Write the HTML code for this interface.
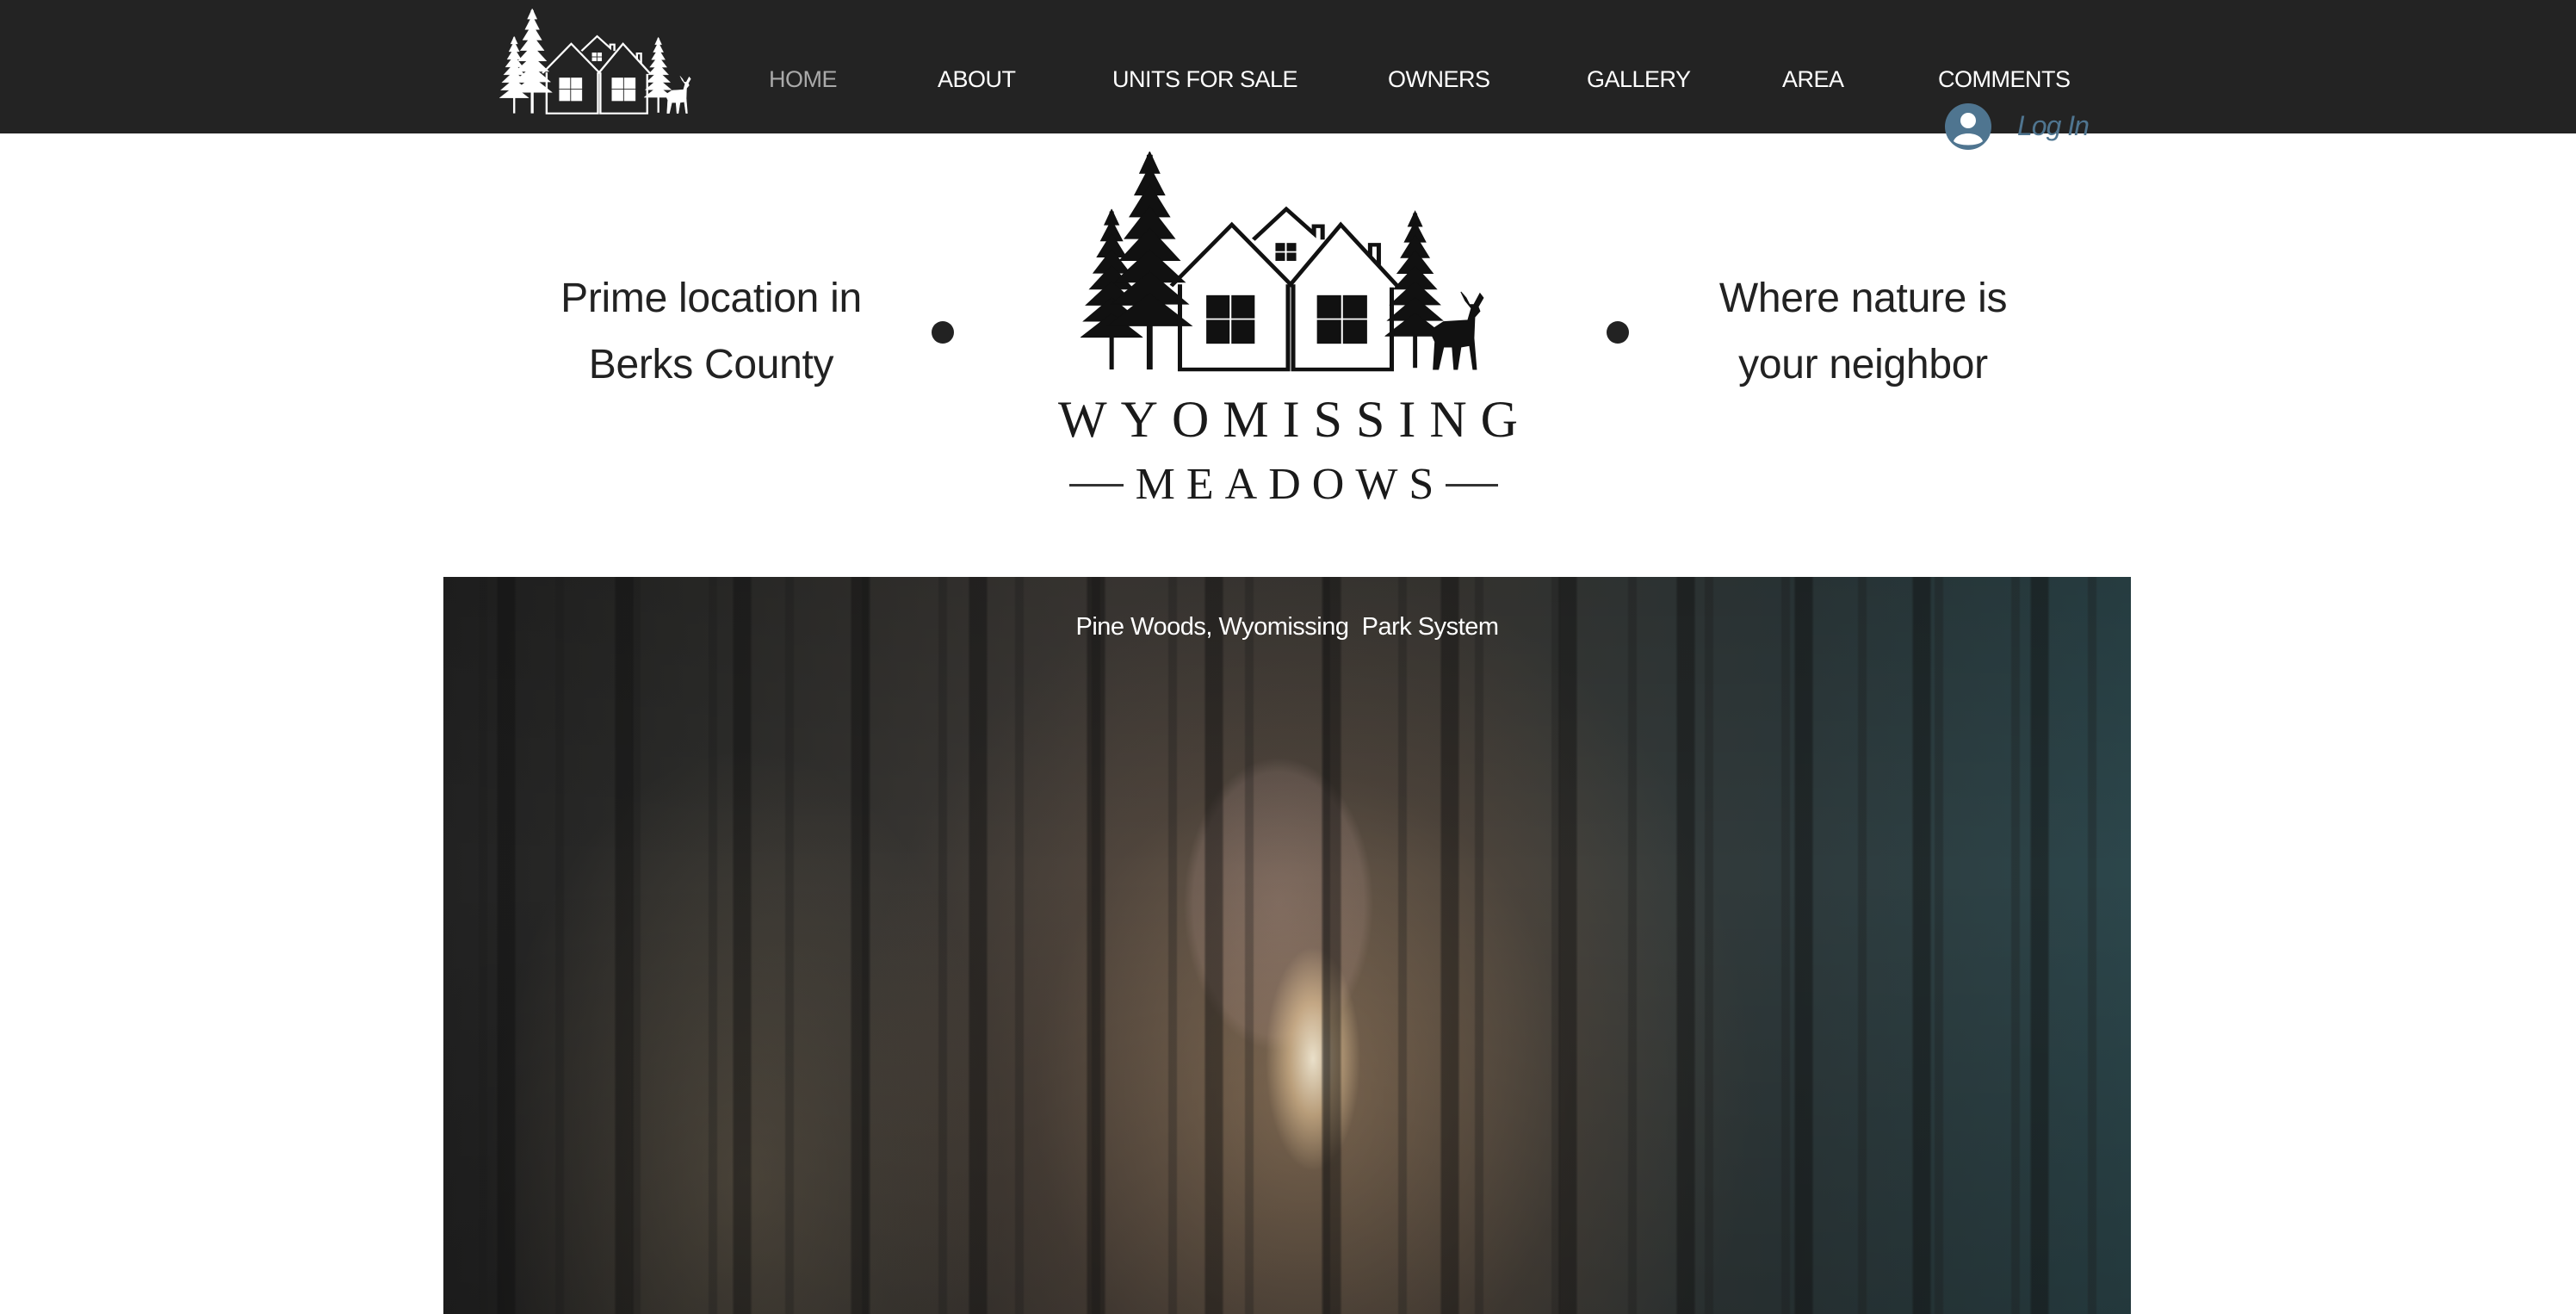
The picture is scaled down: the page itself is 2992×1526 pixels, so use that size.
<!DOCTYPE html>
<html><head><meta charset="utf-8">
<style>
*{margin:0;padding:0;box-sizing:border-box}
body{width:2992px;height:1526px;overflow:hidden;background:#fff;font-family:"Liberation Sans",sans-serif;position:relative}
.nav{position:absolute;left:0;top:0;width:2992px;height:155px;background:#232323}
.nav a{position:absolute;top:76px;font-size:27px;color:#fff;text-decoration:none;letter-spacing:-0.5px;line-height:32px}
.txt{position:absolute;font-size:48px;color:#222;text-align:center;line-height:77px;letter-spacing:-0.3px}
.dot{position:absolute;width:26px;height:26px;border-radius:50%;background:#222}
.photo{position:absolute;left:515px;top:670px;width:1960px;height:856px;overflow:hidden;
background:
radial-gradient(ellipse 55px 130px at 1010px 560px,rgba(255,244,220,1),rgba(255,220,170,.6) 50%,rgba(255,200,150,0) 100%),
radial-gradient(ellipse 110px 170px at 970px 380px,rgba(230,190,185,.22),rgba(230,190,185,.14) 90%,rgba(0,0,0,0) 100%),
radial-gradient(ellipse 520px 620px at 1000px 600px,rgba(210,165,120,.5),rgba(150,110,80,.18) 60%,rgba(0,0,0,0) 100%),
radial-gradient(ellipse 300px 500px at 350px 700px,rgba(200,170,130,.25),rgba(0,0,0,0) 100%),
linear-gradient(90deg,#222 0%,#2c2c2a 15%,#403c38 40%,#3c3a36 60%,#2e3a3c 80%,#2c464b 100%);}
.trunks{position:absolute;inset:0;background:
repeating-linear-gradient(90deg,rgba(15,15,15,0) 0,rgba(15,15,15,0) 61px,rgba(15,15,15,.45) 64px,rgba(15,15,15,.45) 82px,rgba(15,15,15,0) 85px,rgba(15,15,15,0) 137px),
repeating-linear-gradient(90deg,rgba(25,25,25,0) 0,rgba(25,25,25,0) 40px,rgba(25,25,25,.3) 42px,rgba(25,25,25,.3) 50px,rgba(25,25,25,0) 52px,rgba(25,25,25,0) 89px),
linear-gradient(180deg,rgba(0,0,0,.15),rgba(0,0,0,0) 40%,rgba(0,0,0,.2))}
.cap{position:absolute;left:0;width:1960px;top:42px;text-align:center;color:#fff;font-size:29px;letter-spacing:-0.5px}
</style></head><body>
<svg width="0" height="0" style="position:absolute">
<defs>
<symbol id="tree" viewBox="0 0 100 300">
<rect x="47" y="5" width="6" height="295"/>
<polygon points="50,0 38,30 62,30"/>
<polygon points="50,20 32,60 68,60"/>
<polygon points="50,45 26,90 74,90"/>
<polygon points="50,75 20,120 80,120"/>
<polygon points="50,105 14,150 86,150"/>
<polygon points="50,135 8,180 92,180"/>
<polygon points="50,165 4,210 96,210"/>
<polygon points="50,195 0,240 100,240"/>
</symbol>
<symbol id="logo" viewBox="0 0 480 300">
<use href="#tree" x="0" y="77" width="72" height="215"/>
<use href="#tree" x="30" y="0" width="100" height="292"/>
<use href="#tree" x="352" y="77" width="70" height="215"/>
<g fill="none" stroke-width="5" stroke-linejoin="miter">
<path d="M105,180 L175,98 L243,178 L301,98 L368,182"/>
<path d="M200,118 L238,77 L270,110 L270,100 L280,100 L280,118"/>
<path d="M335,140 L335,125 L345,125 L345,152"/>
<path d="M115,178 V292 H240 V178 M246,178 V292 H360 V182"/>
</g>
<rect x="146" y="193" width="26" height="30"/><rect x="175" y="193" width="26" height="30"/>
<rect x="146" y="226" width="26" height="31"/><rect x="175" y="226" width="26" height="31"/>
<rect x="274" y="193" width="27" height="30"/><rect x="304" y="193" width="27" height="30"/>
<rect x="274" y="226" width="27" height="31"/><rect x="304" y="226" width="27" height="31"/>
<rect x="226" y="123" width="10" height="10"/><rect x="239" y="123" width="10" height="10"/>
<rect x="226" y="136" width="10" height="10"/><rect x="239" y="136" width="10" height="10"/>
<path d="M408,292 L410,255 L404,240 L420,228 L448,226 L452,210 L445,200 L440,188 L446,196 L450,205 L455,205 L462,190 L466,196 L460,208 L462,214 L456,222 L455,250 L458,292 L454,292 L450,260 L440,262 L436,292 L432,292 L430,262 L420,262 L414,292 Z"/>
</symbol>
</defs>
</svg>
<div class="nav">
<svg style="position:absolute;left:580px;top:10px" width="229" height="125" viewBox="0 0 480 300" preserveAspectRatio="none" fill="#fff" stroke="#fff"><use href="#logo"/></svg>
<a style="left:893px;color:#aaa">HOME</a>
<a style="left:1089px">ABOUT</a>
<a style="left:1292px">UNITS FOR SALE</a>
<a style="left:1612px">OWNERS</a>
<a style="left:1843px">GALLERY</a>
<a style="left:2070px">AREA</a>
<a style="left:2251px">COMMENTS</a>
</div>
<svg style="position:absolute;left:2259px;top:120px" width="54" height="54" viewBox="0 0 54 54">
<circle cx="27" cy="27" r="27" fill="#4f7590"/>
<circle cx="27" cy="20" r="9" fill="#fff"/>
<path d="M10,44 C14,32 40,32 44,44 C38,50 16,50 10,44Z" fill="#fff"/>
</svg>
<div style="position:absolute;left:2343px;top:128px;font-size:32px;color:#4f7590;font-style:italic;letter-spacing:-1px">Log In</div>
<div class="txt" style="left:576px;width:500px;top:308px">Prime location in<br>Berks County</div>
<div class="txt" style="left:1914px;width:500px;top:308px">Where nature is<br>your neighbor</div>
<div class="dot" style="left:1082px;top:373px"></div>
<div class="dot" style="left:1866px;top:373px"></div>
<svg style="position:absolute;left:1255px;top:176px" width="482" height="260" viewBox="0 0 480 300" preserveAspectRatio="none" fill="#111" stroke="#111"><use href="#logo"/></svg>
<div style="position:absolute;left:1213px;width:560px;top:451px;text-align:center;font-family:'Liberation Serif',serif;font-size:60px;line-height:72px;letter-spacing:16px;color:#1a1a1a;padding-left:16px">WYOMISSING</div>
<div style="position:absolute;left:1242px;top:562px;width:63px;height:3px;background:#333"></div>
<div style="position:absolute;left:1679px;top:562px;width:61px;height:3px;background:#333"></div>
<div style="position:absolute;left:1305px;width:374px;top:531px;text-align:center;font-family:'Liberation Serif',serif;font-size:52px;line-height:64px;letter-spacing:13px;color:#1a1a1a;padding-left:13px">MEADOWS</div>
<div class="photo"><div class="trunks"></div><div class="cap">Pine Woods, Wyomissing&nbsp; Park System</div></div>
</body></html>
